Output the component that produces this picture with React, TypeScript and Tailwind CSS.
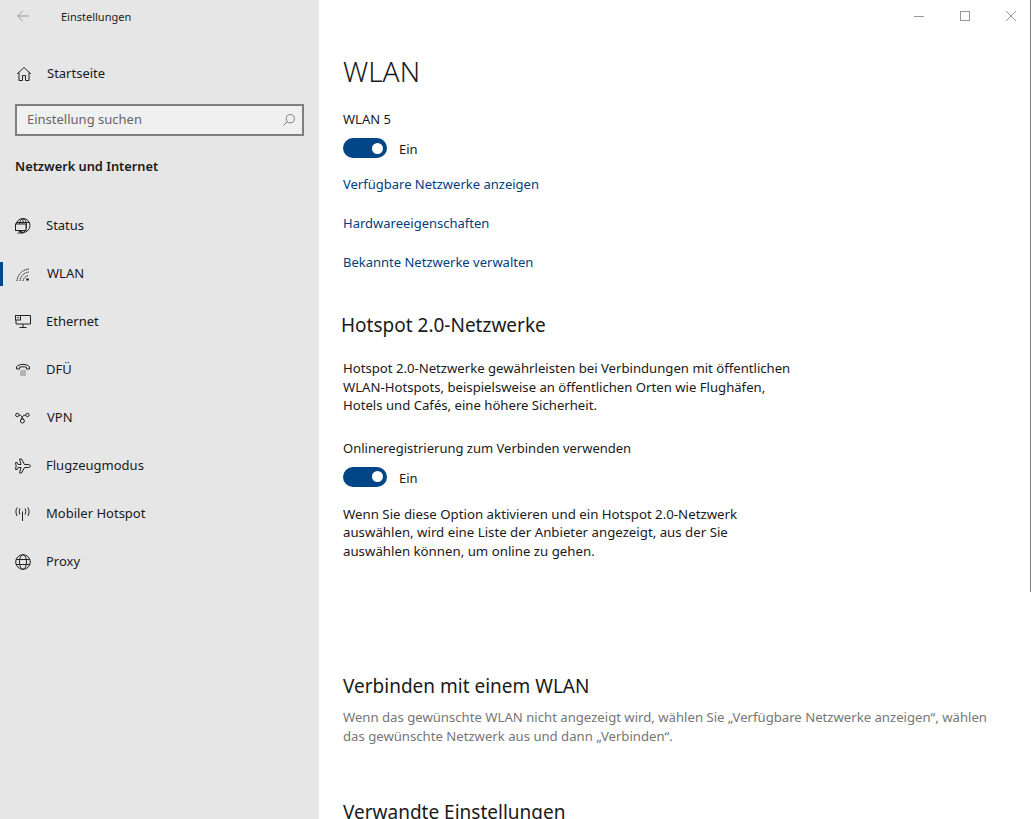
const FONT = "font-['Noto_Sans','Open_Sans',sans-serif]";

function Icon({ children }: { children: React.ReactNode }) {
  return (
    <svg viewBox="0 0 16 16" fill="none" stroke="currentColor" strokeWidth="1" className="size-4 shrink-0 text-[#222]">
      {children}
    </svg>
  );
}

const NAV = [
  {
    label: "Status",
    icon: (
      <>
        <circle cx="8" cy="7.500" r="7" />
        <ellipse cx="8" cy="7.500" rx="3.500" ry="7" />
        <path d="M1.500 4.500h13M8 .5v5" />
        <rect x=".5" y="6" width="10.500" height="6.500" fill="#e6e6e6" />
        <path d="M5.500 12.500v2.500M2.500 15h6" />
      </>
    ),
  },
  {
    label: "WLAN",
    wide: true,
    active: true,
    icon: (
      <>
        <path d="M2 15A13 13 0 0 1 14 3" strokeDasharray="1.600 .5" />
        <path d="M5 15A10 10 0 0 1 14 6" strokeDasharray="1.600 .5" />
        <path d="M8 15A7 7 0 0 1 13 9.500" strokeDasharray="1.600 .5" />
        <circle cx="12.500" cy="13.500" r="1.300" fill="currentColor" stroke="none" />
      </>
    ),
  },
  {
    label: "Ethernet",
    icon: (
      <>
        <path d="M5.500 1.500h10v8.500H1V6" />
        <path d="M8 10v3.500M4.500 13.500h7" />
        <rect x=".5" y="1.500" width="5" height="4.500" />
        <path d="M2 3.200l1 1 1-1" />
      </>
    ),
  },
  {
    label: "DFÜ",
    icon: (
      <>
        <path d="M1.500 7V5C3.500 1.500 12.500 1.500 14.500 5V7h-3V5.200C9.500 4.700 6.500 4.700 4.500 5.200V7z" />
        <path d="M5.500 9h1M7.500 9h1M9.500 9h1M5.500 11h1M7.500 11h1M9.500 11h1M5.500 13h1M7.500 13h1M9.500 13h1" />
      </>
    ),
  },
  {
    label: "VPN",
    wide: true,
    icon: (
      <>
        <circle cx="2.300" cy="5" r="1.700" />
        <circle cx="12.500" cy="5" r="1.700" />
        <circle cx="7.400" cy="11" r="2" />
        <path d="M4 5c2.500 0 3 2 4.500 4.500M10.800 5C8 5 7 7 6 9.200" />
      </>
    ),
  },
  {
    label: "Flugzeugmodus",
    icon: (
      <path d="M15.500 8C15.500 7 14 6.500 13 6.500H9.500L6.500 1H4.500L6 6.500H3.200L2.200 4.500H.5L1.200 8L.5 11.500H2.200L3.200 9.500H6L4.500 15H6.500L9.500 9.500H13C14 9.500 15.500 9 15.500 8z" />
    ),
  },
  {
    label: "Mobiler Hotspot",
    icon: (
      <>
        <path d="M7.500 5.500V15" />
        <path d="M5 2.500c-1 2-1 4 0 6M2.200 1.500C.5 4 .5 7.500 2.200 10M10 2.500c1 2 1 4 0 6M12.800 1.500c1.700 2.500 1.700 6 0 8.500" />
      </>
    ),
  },
  {
    label: "Proxy",
    icon: (
      <>
        <circle cx="8" cy="8" r="7.300" />
        <ellipse cx="8" cy="8" rx="3.500" ry="7.300" />
        <path d="M1.200 5.500h13.600M1.200 10.500h13.600" />
      </>
    ),
  },
];

function Toggle() {
  return (
    <div className="flex h-5 items-center gap-3">
      <div className="flex h-5 w-11 items-center justify-end rounded-full bg-[#004586] pr-1">
        <div className="size-[11px] rounded-full bg-white" />
      </div>
      <span className="pt-0.5 text-[13px] leading-5 text-[#1a1a1a]">Ein</span>
    </div>
  );
}

function Sidebar() {
  return (
    <aside className="flex h-full w-[319px] shrink-0 flex-col bg-[#e6e6e6]">
      <div className="flex h-8 items-center pl-[17px]">
        <svg viewBox="0 0 12 12" fill="none" stroke="#999" strokeWidth="1" className="size-3 shrink-0">
          <path d="M12 6H.7M6 .7L.7 6l5.300 5.300" />
        </svg>
        <span className="ml-8 pt-0.5 text-[11px] text-[#1a1a1a]">Einstellungen</span>
      </div>
      <div className="mt-[18px] flex h-12 items-center pl-4">
        <Icon>
          <path d="M1 8l7-6.500L15 8M3 6.500V14.500h3.500V9.500h3v5H13V6.500" />
        </Icon>
        <span className="ml-[15px] text-[13px] text-[#1a1a1a]">Startseite</span>
      </div>
      <div className="mx-[15px] mt-1.5 flex h-8 items-center justify-between border-2 border-[#7f7f7f] bg-[#f0f0f0] pr-[7px] pl-2.5">
        <span className="text-[13px] text-[#666]">Einstellung suchen</span>
        <svg viewBox="0 0 14 14" fill="none" stroke="#777" strokeWidth="1.100" className="size-3">
          <circle cx="8.500" cy="5.500" r="4.800" />
          <path d="M5.200 8.800L.5 13.500" />
        </svg>
      </div>
      <h2 className="mt-5 pl-[15px] text-[12.800px] leading-5 font-semibold text-[#1a1a1a]">Netzwerk und Internet</h2>
      <nav className="mt-[26px] flex flex-col">
        {NAV.map((item) => (
          <div key={item.label} className="relative flex h-12 items-center pl-[15px]">
            {item.active && <div className="absolute top-3 left-0 h-6 w-[3px] bg-[#004586]" />}
            <Icon>{item.icon}</Icon>
            <span className={`text-[13px] text-[#1a1a1a] ${item.wide ? "ml-4" : "ml-[15px]"}`}>{item.label}</span>
          </div>
        ))}
      </nav>
    </aside>
  );
}

export default function App() {
  return (
    <div className={`flex h-[819px] w-[1031px] overflow-hidden bg-white ${FONT}`}>
      <Sidebar />
      <main className="relative h-full flex-1 overflow-hidden pl-6 text-[13px] text-[#1a1a1a]">
        <div className="absolute top-0 right-0 h-[592px] w-px bg-[#7a7a7a]" />
        <div className="flex h-8 items-center justify-end gap-9 pr-[15px]">
          <div className="h-px w-2.5 bg-[#999]" />
          <div className="size-2.5 border border-[#999]" />
          <svg viewBox="0 0 10 10" stroke="#999" strokeWidth="1" className="size-2.5">
            <path d="M0 0l10 10M10 0L0 10" />
          </svg>
        </div>
        <h1 className="mt-[19px] text-[28px] leading-[40px] font-light">WLAN</h1>
        <p className="mt-[18px] leading-5">WLAN 5</p>
        <div className="mt-[9px]">
          <Toggle />
        </div>
        <div className="mt-4 flex flex-col gap-[19px] text-[#003e7e]">
          <a className="leading-5">Verfügbare Netzwerke anzeigen</a>
          <a className="leading-5">Hardwareeigenschaften</a>
          <a className="leading-5">Bekannte Netzwerke verwalten</a>
        </div>
        <h2 className="mt-[39px] -ml-0.5 text-[19px] leading-7">Hotspot 2.0-Netzwerke</h2>
        <p className="mt-5 w-[455px] text-[13.150px] leading-[18.500px]">
          Hotspot 2.0-Netzwerke gewährleisten bei Verbindungen mit öffentlichen WLAN-Hotspots, beispielsweise an öffentlichen Orten wie Flughäfen, Hotels und Cafés, eine höhere Sicherheit.
        </p>
        <p className="mt-[23px] leading-5">Onlineregistrierung zum Verbinden verwenden</p>
        <div className="mt-[9px]">
          <Toggle />
        </div>
        <p className="mt-[18px] w-[420px] text-[13.250px] leading-[18.500px]">
          Wenn Sie diese Option aktivieren und ein Hotspot 2.0-Netzwerk auswählen, wird eine Liste der Anbieter angezeigt, aus der Sie auswählen können, um online zu gehen.
        </p>
        <h2 className="mt-[112px] text-[19px] leading-7">Verbinden mit einem WLAN</h2>
        <p className="mt-2 w-[655px] text-[13.150px] leading-[19px] text-[#767676]">
          Wenn das gewünschte WLAN nicht angezeigt wird, wählen Sie „Verfügbare Netzwerke anzeigen“, wählen das gewünschte Netzwerk aus und dann „Verbinden“.
        </p>
        <h2 className="mt-[52px] text-[19px] leading-7">Verwandte Einstellungen</h2>
      </main>
    </div>
  );
}
